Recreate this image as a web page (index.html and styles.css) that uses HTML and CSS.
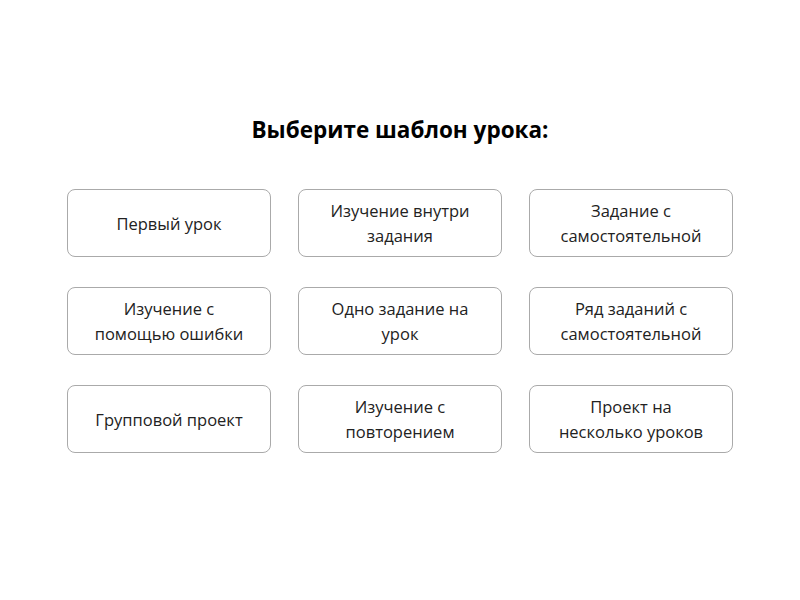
FILE: index.html
```html
<!DOCTYPE html>
<html lang="ru">
<head>
    <meta charset="UTF-8">
    <meta name="viewport" content="width=device-width, initial-scale=1.0">
    <title>Шаблоны уроков</title>
    <link rel="stylesheet" href="styles.css">
</head>
<body>
    <div class="shablony">
        <h1 class="zagolovok">Выберите шаблон урока:</h1>
        <div class="setka">
            <button class="kartochka"><span class="tekst">Первый урок</span></button>
            <button class="kartochka"><span class="tekst">Изучение внутри задания</span></button>
            <button class="kartochka"><span class="tekst">Задание с самостоятельной</span></button>

            <button class="kartochka"><span class="tekst">Изучение с помощью ошибки</span></button>
            <button class="kartochka"><span class="tekst">Одно задание на урок</span></button>
            <button class="kartochka"><span class="tekst">Ряд заданий с самостоятельной</span></button>

            <button class="kartochka"><span class="tekst">Групповой проект</span></button>
            <button class="kartochka"><span class="tekst">Изучение с повторением</span></button>
            <button class="kartochka"><span class="tekst">Проект на несколько уроков</span></button>
        </div>
    </div>
</body>
</html>
```

FILE: styles.css
```css
body {
    margin: 0;
    background-color: #fff;
    font-family: "Open Sans", "Noto Sans", sans-serif;
    color: #222;
}

.shablony {
    width: 666px;
    margin: 0 auto;
    padding-top: 112px;
}

.zagolovok {
    margin: 0 0 41px 0;
    font-size: 22.5px;
    font-weight: 700;
    line-height: 36px;
    text-align: center;
    color: #000;
}

.setka {
    display: grid;
    grid-template-columns: repeat(3, 1fr);
    column-gap: 27px;
    row-gap: 30px;
}

.kartochka {
    height: 68px;
    padding: 0 22px;
    background-color: #fff;
    border: 1px solid #aaa;
    border-radius: 8px;
    font-family: inherit;
    font-size: 16.5px;
    color: #222;
    cursor: pointer;
    display: flex;
    align-items: center;
    justify-content: center;
}

.tekst {
    line-height: 25px;
    text-align: center;
}
```
